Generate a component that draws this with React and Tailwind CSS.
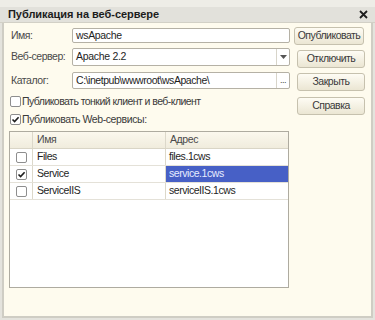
function Check({ checked }) {
  return (
    <span className="w-[11px] h-[11px] shrink-0 border border-[#8e8e8e] rounded-[2px] bg-white flex items-center justify-center">
      {checked && (
        <svg width="9" height="9" viewBox="0 0 9 9">
          <path d="M1.5 4.5 L3.6 6.6 L7.6 2.2" stroke="#1e1e1e" strokeWidth="1.6" fill="none" />
        </svg>
      )}
    </span>
  );
}

function Btn({ children, className = "" }) {
  return (
    <div
      className={
        "h-[18px] w-[68px] border border-[#c6c1ae] rounded-[3px] bg-gradient-to-b from-[#fefcf4] to-[#ebe6d3] flex items-center justify-center text-[10.5px] tracking-[-0.5px] whitespace-nowrap text-[#3a3a3a] " +
        className
      }
    >
      {children}
    </div>
  );
}

export default function App() {
  const rows = [
    { name: "Files", addr: "files.1cws", checked: false, sel: false },
    { name: "Service", addr: "service.1cws", checked: true, sel: true },
    { name: "ServiceIIS", addr: "serviceIIS.1cws", checked: false, sel: false },
  ];
  return (
    <div className="w-[375px] h-[320px] bg-[#e4e3dd] flex flex-col font-['Liberation_Sans',Arial,sans-serif] overflow-hidden">
      <div className="h-[7px] bg-[#eeede7]" />
      <div className="h-[16px] bg-[#e2e1db] flex items-center justify-between pl-[8px] pr-[7px] border-b border-[#d2d0c6]">
        <span className="text-[11px] font-bold text-[#1c1c1c] tracking-[-0.05px] whitespace-nowrap">Публикация на веб-сервере</span>
        <svg width="9" height="9" viewBox="0 0 9 9">
          <path d="M1 1 L8 8 M8 1 L1 8" stroke="#1e1e1e" strokeWidth="1.8" />
        </svg>
      </div>
      <div className="flex-1 mx-[2px] mb-[2px] border-l-2 border-r-2 border-b-2 border-[#cfcdc4] bg-[#fefbee] flex pl-[5px] pt-[4px]">
        <div className="w-[281px] flex flex-col">
          <div className="flex items-center h-[15px] mt-[1px]">
            <span className="w-[63px] pl-[2px] text-[10.5px] tracking-[-0.45px] whitespace-nowrap text-[#4a4a4a]">Имя:</span>
            <div className="flex-1 h-[15px] border border-[#b5b1a5] rounded-[2px] bg-white px-[3px] flex items-center text-[10.5px] tracking-[-0.35px] text-[#1e1e1e]">wsApache</div>
          </div>
          <div className="flex items-center h-[18px] mt-[5px]">
            <span className="w-[63px] pl-[2px] text-[10.5px] tracking-[-0.45px] whitespace-nowrap text-[#4a4a4a]">Веб-сервер:</span>
            <div className="flex-1 h-[18px] border border-[#b5b1a5] rounded-[2px] bg-white flex items-center text-[10.5px] tracking-[-0.3px] text-[#1e1e1e]">
              <span className="flex-1 px-[3px]">Apache 2.2</span>
              <div className="w-[13px] h-full border-l border-[#d8d5ca] flex items-center justify-center">
                <svg width="7" height="4" viewBox="0 0 7 4"><path d="M0 0 L7 0 L3.5 4 Z" fill="#555" /></svg>
              </div>
            </div>
          </div>
          <div className="flex items-center h-[17px] mt-[6px]">
            <span className="w-[63px] pl-[2px] text-[10.5px] tracking-[-0.45px] whitespace-nowrap text-[#4a4a4a]">Каталог:</span>
            <div className="flex-1 h-[17px] border border-[#b5b1a5] rounded-[2px] bg-white flex items-center text-[10.5px] tracking-[-0.45px] text-[#1e1e1e]">
              <span className="flex-1 px-[3px] whitespace-nowrap">C:\inetpub\wwwroot\wsApache\</span>
              <div className="w-[13px] h-full border-l border-[#d8d5ca] flex items-end justify-center pb-[3px] text-[9px] leading-none text-[#444]">...</div>
            </div>
          </div>
          <div className="flex items-center gap-[1px] mt-[6px] h-[12px] pl-[1px]">
            <Check />
            <span className="text-[10.5px] tracking-[-0.55px] whitespace-nowrap text-[#3a3a3a] leading-none">Публиковать тонкий клиент и веб-клиент</span>
          </div>
          <div className="flex items-center gap-[1px] mt-[6px] h-[12px] pl-[1px]">
            <Check checked />
            <span className="text-[10.5px] tracking-[-0.4px] whitespace-nowrap text-[#3a3a3a] leading-none">Публиковать Web-сервисы:</span>
          </div>
          <div className="mt-[6px] w-[280px] h-[157px] border border-[#aeaba0] bg-white flex flex-col">
            <div className="flex h-[17px] bg-gradient-to-b from-[#fbf8ee] to-[#f0ecdd] border-b border-[#d9d5c6] text-[10.5px] tracking-[-0.4px] text-[#4a4a4a]">
              <div className="w-[23px] border-r border-[#dcd8ca]" />
              <div className="w-[133px] border-r border-[#dcd8ca] flex items-center pl-[4px]">Имя</div>
              <div className="flex-1 flex items-center pl-[4px]">Адрес</div>
            </div>
            {rows.map((r) => (
              <div key={r.name} className="flex h-[17px] border-b border-[#e4e1d8] text-[10.5px] tracking-[-0.45px] text-[#1e1e1e]">
                <div className="w-[23px] border-r border-[#dcd8ca] flex items-center justify-center">
                  <Check checked={r.checked} />
                </div>
                <div className="w-[133px] border-r border-[#dcd8ca] flex items-center pl-[4px]">{r.name}</div>
                <div className={"flex-1 flex items-center pl-[3px] " + (r.sel ? "bg-[#4760c6] text-[#e6ecff]" : "")}>{r.addr}</div>
              </div>
            ))}
          </div>
        </div>
        <div className="flex flex-col items-start pl-[4px] pt-[0px]">
          <Btn className="w-[70px] border-[#b8b296]">Опубликовать</Btn>
          <Btn className="mt-[5px] ml-[3px] w-[66px]">Отключить</Btn>
          <Btn className="mt-[5px] ml-[3px] w-[66px]">Закрыть</Btn>
          <Btn className="mt-[6px] ml-[3px] w-[66px]">Справка</Btn>
        </div>
      </div>
    </div>
  );
}
